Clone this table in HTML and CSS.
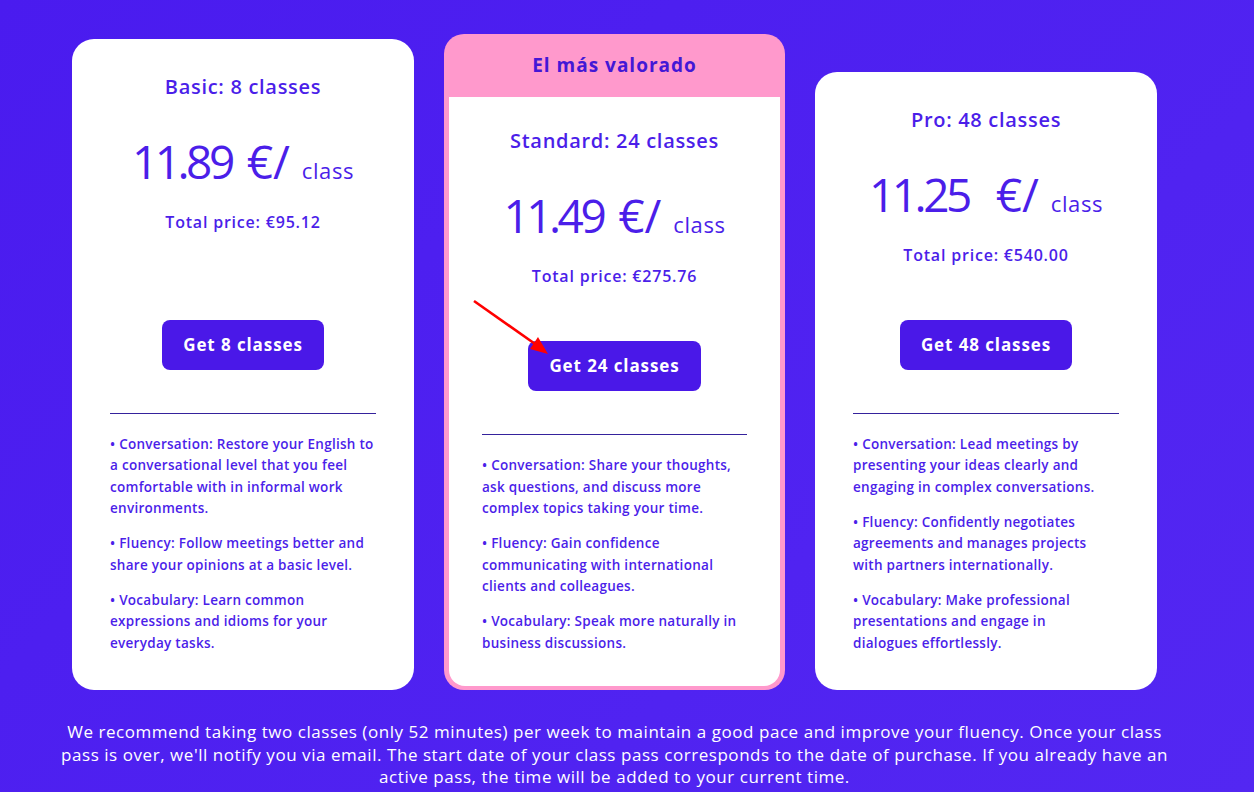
FILE: index.html
```html
<!DOCTYPE html>
<html lang="es">
<head>
    <meta charset="UTF-8">
    <meta name="viewport" content="width=device-width, initial-scale=1.0">
    <title>Class passes</title>
    <link rel="stylesheet" href="styles.css">
</head>
<body>
    <div class="page">
        <div class="plans">
            <div class="card">
                <h2 class="plan-name">Basic: 8 classes</h2>
                <div class="price"><span class="amount">11.89</span> €/ <span class="unit">class</span></div>
                <div class="total total-tall">Total price: €95.12</div>
                <a class="buy" href="#">Get 8 classes</a>
                <hr class="divider">
                <div class="features">
                    <p>• Conversation: Restore your English to a conversational level that you feel comfortable with in informal work environments.</p>
                    <p>• Fluency: Follow meetings better and share your opinions at a basic level.</p>
                    <p>• Vocabulary: Learn common expressions and idioms for your everyday tasks.</p>
                </div>
            </div>

            <div class="card featured">
                <div class="badge">El más valorado</div>
                <div class="card-body">
                    <h2 class="plan-name">Standard: 24 classes</h2>
                    <div class="price"><span class="amount">11.49</span> €/ <span class="unit">class</span></div>
                    <div class="total">Total price: €275.76</div>
                    <a class="buy" href="#">Get 24 classes</a>
                    <hr class="divider">
                    <div class="features">
                        <p>• Conversation: Share your thoughts, ask questions, and discuss more complex topics taking your time.</p>
                        <p>• Fluency: Gain confidence communicating with international clients and colleagues.</p>
                        <p>• Vocabulary: Speak more naturally in business discussions.</p>
                    </div>
                </div>
                <!-- flecha roja de la captura -->
                <svg class="arrow" width="84" height="64" viewBox="0 0 84 64">
                    <line x1="4" y1="5" x2="68" y2="50" stroke="#ff0000" stroke-width="2.6"/>
                    <polygon points="68,41 60,53 78,58" fill="#ff0000"/>
                </svg>
            </div>

            <div class="card">
                <h2 class="plan-name">Pro: 48 classes</h2>
                <div class="price"><span class="amount">11.25</span> &nbsp;€/ <span class="unit">class</span></div>
                <div class="total">Total price: €540.00</div>
                <a class="buy" href="#">Get 48 classes</a>
                <hr class="divider">
                <div class="features">
                    <p>• Conversation: Lead meetings by presenting your ideas clearly and engaging in complex conversations.</p>
                    <p>• Fluency: Confidently negotiates agreements and manages projects with&nbsp;partners internationally.</p>
                    <p>• Vocabulary: Make professional presentations and engage in dialogues&nbsp;effortlessly.</p>
                </div>
            </div>
        </div>

        <p class="note">We recommend taking two classes (only 52 minutes) per week to maintain a good pace and improve your fluency. Once your class pass is over, we'll notify you via email. The start date of your class pass corresponds to the date of purchase. If you already have an active pass, the time will be added to your current time.</p>
    </div>
</body>
</html>
```

FILE: styles.css
```css
body {
    margin: 0;
    padding: 0 25px 0 0;
    font-family: "Open Sans", Arial, sans-serif;
    background: linear-gradient(135deg, #4a1bef 0%, #5327f2 100%);
    min-height: 100vh;
    color: #4b1ee9;
}

.page {
    max-width: 1110px;
    margin: 0 auto;
    padding-top: 34px;
}

.plans {
    display: flex;
    justify-content: center;
    align-items: flex-end;
    gap: 30px;
}

.card {
    width: 342px;
    box-sizing: border-box;
    background: white;
    border-radius: 22px;
    padding: 36px 38px 36px;
    text-align: center;
}

.plan-name {
    margin: 0;
    font-size: 20px;
    line-height: 24px;
    font-weight: 600;
    letter-spacing: 0.7px;
}

.price {
    margin-top: 35px;
    font-size: 46px;
    line-height: 54px;
    font-weight: 400;
}

.price .amount {
    letter-spacing: -3.5px;
    margin-right: 3px;
}

.price .unit {
    font-size: 22px;
    line-height: 1;
    letter-spacing: 0.6px;
}

.total {
    margin-top: 24px;
    margin-bottom: 55px;
    font-size: 16px;
    line-height: 20px;
    font-weight: 600;
    letter-spacing: 0.8px;
}

.total-tall {
    margin-bottom: 88px;
}

.buy {
    display: block;
    width: fit-content;
    margin: 0 auto;
    padding: 0 21px;
    height: 50px;
    line-height: 50px;
    background: #4a18e8;
    color: white;
    border-radius: 8px;
    font-size: 17px;
    font-weight: 700;
    letter-spacing: 0.9px;
    text-decoration: none;
}

.divider {
    margin: 43px 0 0;
    border: none;
    border-top: 1px solid #35229c;
}

.features {
    margin-top: 20px;
    text-align: left;
    font-size: 13.5px;
    line-height: 21.5px;
    font-weight: 600;
    letter-spacing: 0.28px;
}

.features p {
    margin: 0 0 13.5px;
}

.features p:last-child {
    margin-bottom: 0;
}

/* tarjeta destacada */
.featured {
    position: relative;
    width: 341px;
    padding: 0;
    background: #ff99cc;
    border-radius: 20px;
}

.badge {
    height: 63px;
    line-height: 63px;
    font-size: 19px;
    font-weight: 700;
    letter-spacing: 1px;
    color: #4317d6;
}

.card-body {
    margin: 0 5px 4px;
    background: white;
    border-radius: 0 0 16px 16px;
    padding: 32px 33px 32px;
}

.arrow {
    position: absolute;
    left: 26px;
    top: 262px;
}

.note {
    margin: 31px 0 0;
    color: white;
    text-align: center;
    font-size: 17px;
    line-height: 22.5px;
    font-weight: 500;
    letter-spacing: 0.55px;
}
```
